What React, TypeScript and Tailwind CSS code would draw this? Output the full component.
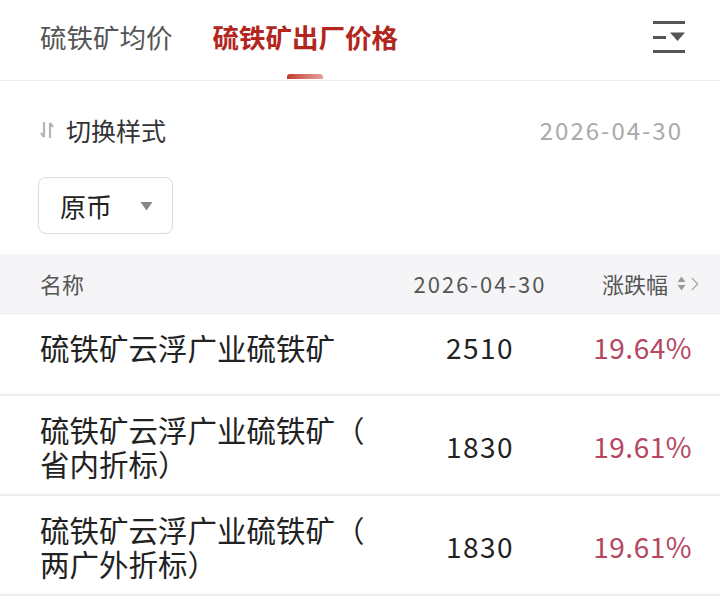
import { ChevronRight } from "lucide-react";

type Row = {
  name: string;
  value: string;
  change: string;
};

const rows: Row[] = [
  { name: "硫铁矿云浮广业硫铁矿", value: "2510", change: "19.64%" },
  { name: "硫铁矿云浮广业硫铁矿（省内折标）", value: "1830", change: "19.61%" },
  { name: "硫铁矿云浮广业硫铁矿（两广外折标）", value: "1830", change: "19.61%" },
];

const font = { fontFamily: '"Noto Sans CJK SC", "Noto Sans", sans-serif' };

const MenuIcon = () => (
  <svg width="34" height="34" viewBox="0 0 34 34" fill="none">
    <rect x="1" y="1" width="32" height="3" fill="#555" />
    <rect x="1" y="16" width="13" height="3" fill="#555" />
    <path d="M18 12.5h15l-7.5 8.5z" fill="#555" />
    <rect x="1" y="30" width="32" height="3" fill="#555" />
  </svg>
);

const SwapIcon = () => (
  <svg width="14" height="18" viewBox="0 0 14 18" fill="none">
    <path d="M4 1v15M1 12l3 4" stroke="#b5b5b5" strokeWidth="2.2" />
    <path d="M10 17V2M13 6l-3-4" stroke="#b5b5b5" strokeWidth="2.2" />
  </svg>
);

const SortIcon = () => (
  <svg width="9" height="15" viewBox="0 0 9 15">
    <path d="M4.5 0.5L8.5 6H0.5z" fill="#999" />
    <path d="M4.5 14.5L8.5 9H0.5z" fill="#999" />
  </svg>
);

export default function App() {
  return (
    <div className="w-[720px] h-[607px] bg-white overflow-hidden" style={font}>
      {/* tabs */}
      <div className="relative flex items-center h-[81px] border-b border-[#eeeeee] pl-[40px] pr-[34px] pb-[6px]">
        <div className="text-[26.5px] leading-[34px] text-[#555]">硫铁矿均价</div>
        <div className="relative ml-[40px] text-[26.5px] leading-[34px] font-bold text-[#b3261e]">
          硫铁矿出厂价格
          <div className="absolute left-1/2 -translate-x-1/2 top-[54px] w-[36px] h-[5px] rounded-t-[3px] bg-gradient-to-r from-[#c0392b] to-[#e8a0a0]" />
        </div>
        <div className="ml-auto">
          <MenuIcon />
        </div>
      </div>

      {/* toolbar */}
      <div className="flex items-center justify-between pl-[40px] pr-[39px] mt-[32px] h-[34px]">
        <div className="flex items-center gap-[12px]">
          <SwapIcon />
          <span className="text-[25px] leading-[34px] text-[#333]">切换样式</span>
        </div>
        <span className="text-[24px] leading-[34px] tracking-[2px] -mr-[2px] text-[#aaa]">2026-04-30</span>
      </div>

      <div className="pl-[38px] mt-[30px]">
        <div className="flex items-center w-[135px] h-[57px] border border-[#dcdcdc] rounded-[8px] pl-[21px]">
          <span className="text-[26px] leading-[34px] text-[#222]">原币</span>
          <svg className="ml-[28px]" width="13" height="10" viewBox="0 0 13 10">
            <path d="M0.5 1h12L6.5 9.5z" fill="#888" />
          </svg>
        </div>
      </div>

      {/* table */}
      <div className="mt-[20px]">
        <div className="flex items-center h-[60px] bg-[#f5f5f7] border-b border-[#eaeaea] pl-[40px] pr-[28px] text-[22px] text-[#555]">
          <div className="w-[335px]">名称</div>
          <div className="w-[210px] text-center text-[22px] tracking-[2px]">2026-04-30</div>
          <div className="flex-1 flex items-center justify-end -mr-[14px]">
            <span>涨跌幅</span>
            <span className="ml-[9px] flex">
              <SortIcon />
            </span>
            <ChevronRight size={22} strokeWidth={1.5} className="text-[#aaa] -ml-[2px]" />
          </div>
        </div>
        {rows.map((row, i) => (
          <div
            key={i}
            className="min-h-[82px] pt-[16px] pb-[14px] pl-[40px] pr-[28px] border-b-2 border-[#eeeeee]"
          >
            <div className="flex items-center">
              <div className="w-[335px] text-[29.5px] leading-[34px] text-[#222] [line-break:anywhere]">
                {row.name}
              </div>
              <div className="w-[210px] text-center text-[28px] leading-[34px] tracking-[1.5px] text-[#222]">
                {row.value}
              </div>
              <div className="flex-1 text-right text-[28px] leading-[34px] tracking-[0.5px] text-[#b5475f]">
                {row.change}
              </div>
            </div>
          </div>
        ))}
      </div>
    </div>
  );
}
